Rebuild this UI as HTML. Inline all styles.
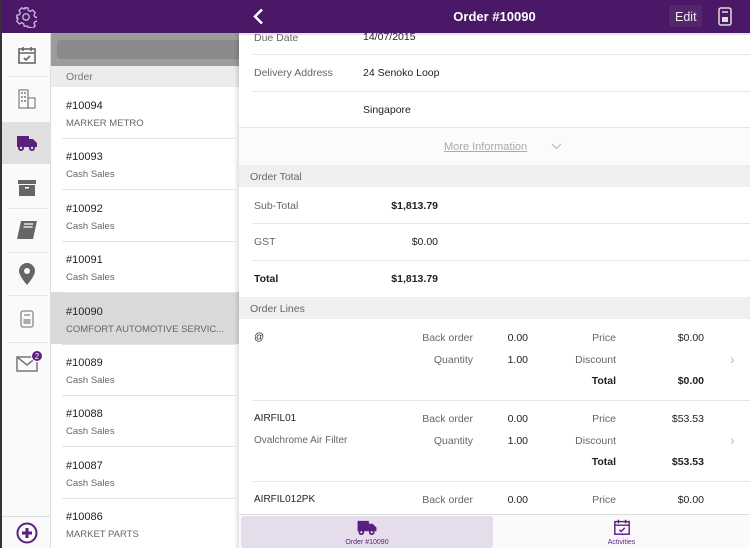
<!DOCTYPE html>
<html><head><style>
*{margin:0;padding:0;box-sizing:border-box}
body{width:750px;height:548px;overflow:hidden;font-family:"Liberation Sans",sans-serif;background:#fff;position:relative}
.a{position:absolute}
.pur{background:#4a1866}
.t{position:absolute;font-size:10.5px;color:#666;white-space:nowrap}
.k{color:#222}
.b{font-weight:bold;color:#222}
.hl{position:absolute;height:1px;background:#e6e6e6}
</style></head><body>
<div class="a" style="left:0;top:0;width:2px;height:548px;background:#333"></div>
<div class="a pur" style="left:2px;top:0;width:49px;height:33px"></div>
<svg class="a" style="left:15px;top:6px" width="22" height="22" viewBox="0 0 24 24" fill="none" stroke="#c9b2e0" stroke-width="1.5"><circle cx="12" cy="12" r="3.5"/><path d="M10 2h4l.6 2.8 2 1 2.6-1.3 2.8 2.8-1.3 2.6 1 2 2.8.6v4l-2.8.6-1 2 1.3 2.6-2.8 2.8-2.6-1.3-2 1L14 22h-4l-.6-2.8-2-1-2.6 1.3-2.8-2.8 1.3-2.6-1-2L2 14v-4l2.8-.6 1-2-1.3-2.6 2.8-2.8 2.6 1.3 2-1z"/></svg>
<div class="a" style="left:2px;top:33px;width:49px;height:515px;background:#fafafa;border-right:1px solid #ddd"></div>
<svg class="a" style="left:17px;top:45px" width="20" height="20" viewBox="0 0 20 20" fill="none" stroke="#666" stroke-width="1.6"><rect x="2" y="4" width="16" height="14"/><path d="M2 8h16M6 2v4M14 2v4M7 13l2 2 4-4"/></svg>
<div class="hl" style="left:8px;top:76px;width:40px"></div>
<svg class="a" style="left:17px;top:88px" width="20" height="22" viewBox="0 0 20 22" fill="#999"><rect x="2" y="2" width="9" height="18" fill="none" stroke="#888" stroke-width="1.3"/><rect x="11" y="10" width="7" height="10" fill="none" stroke="#888" stroke-width="1.3"/><rect x="4" y="4" width="2" height="2"/><rect x="7" y="4" width="2" height="2"/><rect x="4" y="8" width="2" height="2"/><rect x="7" y="8" width="2" height="2"/><rect x="4" y="12" width="2" height="2"/><rect x="7" y="12" width="2" height="2"/></svg>
<div class="a" style="left:2px;top:122px;width:48px;height:42px;background:#e0e0e0"></div>
<svg class="a" style="left:16px;top:134px" width="22" height="18" viewBox="0 0 22 18" fill="#5b1f7e"><path d="M1 2h12v11H1zM13 5h4l4 4v4h-8z"/><circle cx="5" cy="14" r="3"/><circle cx="16" cy="14" r="3"/><circle cx="5" cy="14" r="1.2" fill="#e0e0e0"/><circle cx="16" cy="14" r="1.2" fill="#e0e0e0"/></svg>
<svg class="a" style="left:18px;top:180px" width="18" height="16" viewBox="0 0 18 16" fill="#666"><rect x="0" y="0" width="18" height="4"/><rect x="1" y="5" width="16" height="11"/><rect x="7" y="7" width="4" height="1.5" fill="#fff"/></svg>
<div class="hl" style="left:8px;top:208px;width:40px"></div>
<svg class="a" style="left:16px;top:220px" width="22" height="20" viewBox="0 0 22 20" fill="#666"><path d="M5 1h16l-4 18H1z"/><path d="M8 4h9M7.5 7h9" stroke="#fff" stroke-width="1.3"/></svg>
<div class="hl" style="left:8px;top:252px;width:40px"></div>
<svg class="a" style="left:19px;top:263px" width="16" height="22" viewBox="0 0 16 22" fill="#666"><path d="M8 0a8 8 0 0 1 8 8c0 5-8 14-8 14S0 13 0 8a8 8 0 0 1 8-8z"/><circle cx="8" cy="8" r="3" fill="#fafafa"/></svg>
<div class="hl" style="left:8px;top:295px;width:40px"></div>
<svg class="a" style="left:20px;top:310px" width="14" height="18" viewBox="0 0 14 18" fill="none" stroke="#888" stroke-width="1.3"><rect x="1" y="1" width="12" height="16" rx="2"/><rect x="3.5" y="9" width="7" height="5" fill="#aaa" stroke="none"/><path d="M4 5h6"/></svg>
<div class="hl" style="left:8px;top:342px;width:40px"></div>
<svg class="a" style="left:16px;top:356px" width="22" height="16" viewBox="0 0 22 16" fill="none" stroke="#777" stroke-width="1.5"><rect x="1" y="1" width="20" height="14"/><path d="M1 1l10 8 10-8"/></svg>
<div class="a" style="left:31px;top:350px;width:12px;height:12px;border-radius:6px;background:#5b1f7e;color:#fff;font-size:8px;text-align:center;line-height:12px;border:1px solid #fff">2</div>
<div class="a" style="left:2px;top:516px;width:49px;height:1px;background:#ddd"></div>
<svg class="a" style="left:16px;top:522px" width="22" height="22" viewBox="0 0 22 22"><circle cx="11" cy="11" r="9.5" fill="none" stroke="#5b1f7e" stroke-width="2"/><path d="M11 6v10M6 11h10" stroke="#5b1f7e" stroke-width="3"/></svg>
<div class="a pur" style="left:51px;top:0;width:188px;height:33px"></div>
<div class="a" style="left:51px;top:33px;width:188px;height:33px;background:#9c9c9c"></div>
<div class="a" style="left:57px;top:40px;width:182px;height:19px;background:#8a8a8a;border-radius:4px 0 0 4px"></div>
<div class="a" style="left:51px;top:66px;width:188px;height:21px;background:#ececec"></div>
<div class="t" style="left:66px;top:71px;font-size:10.5px;color:#777">Order</div>
<div class="a" style="left:51px;top:292px;width:188px;height:52px;background:#d9d9d9"></div>
<div class="a" style="left:234px;top:33px;width:5px;height:515px;background:linear-gradient(to right,rgba(0,0,0,0),rgba(0,0,0,.12))"></div>
<div id="list"></div>
<div class="a pur" style="left:239px;top:0;width:511px;height:33px"></div>
<svg class="a" style="left:252px;top:8px" width="12" height="17" viewBox="0 0 12 17"><path d="M10 1.5L3 8.5l7 7" stroke="#fff" stroke-width="2.5" fill="none"/></svg>
<div class="a" style="left:239px;top:9px;width:511px;text-align:center;color:#fff;font-size:13px;font-weight:bold">Order #10090</div>
<div class="a" style="left:669px;top:5px;width:33px;height:22px;background:#55256e;border-radius:2px"></div>
<div class="t" style="left:675px;top:10px;color:#eee;font-size:12.5px">Edit</div>
<svg class="a" style="left:718px;top:7px" width="14" height="19" viewBox="0 0 14 19" fill="none" stroke="#ddd" stroke-width="1.5"><rect x="1" y="1" width="12" height="17" rx="2"/><rect x="4" y="10" width="6" height="5" fill="#ddd" stroke="none"/><path d="M4 5h6"/></svg>
<div class="a" style="left:239px;top:33px;width:511px;height:2px;background:#e8e2ee"></div>
<div class="t" style="left:254px;top:32px">Due Date</div><div class="t k" style="left:363px;top:31px">14/07/2015</div>
<div class="hl" style="left:252px;top:54px;width:498px"></div>
<div class="t" style="left:254px;top:67px">Delivery Address</div><div class="t k" style="left:363px;top:67px">24 Senoko Loop</div>
<div class="hl" style="left:252px;top:91px;width:498px"></div>
<div class="t k" style="left:363px;top:104px">Singapore</div>
<div class="a" style="left:239px;top:127px;width:511px;height:38px;background:#fbfbfb;border-top:1px solid #e6e6e6"></div>
<div class="t" style="left:444px;top:141px;color:#aaa;text-decoration:underline;font-size:11px">More Information</div>
<svg class="a" style="left:551px;top:143px" width="11" height="7" viewBox="0 0 11 7"><path d="M1 1l4.5 4.5L10 1" stroke="#bbb" stroke-width="1.2" fill="none"/></svg>
<div class="a" style="left:239px;top:165px;width:511px;height:22px;background:#efefef"></div>
<div class="t" style="left:250px;top:171px">Order Total</div>
<div class="t" style="left:254px;top:200px">Sub-Total</div><div class="t b" style="left:340px;top:200px;width:98px;text-align:right">$1,813.79</div>
<div class="hl" style="left:252px;top:223px;width:498px"></div>
<div class="t" style="left:254px;top:236px">GST</div><div class="t b" style="left:340px;top:236px;width:98px;text-align:right;font-weight:normal">$0.00</div>
<div class="hl" style="left:252px;top:260px;width:498px"></div>
<div class="t b" style="left:254px;top:273px">Total</div><div class="t b" style="left:340px;top:273px;width:98px;text-align:right">$1,813.79</div>
<div class="a" style="left:239px;top:297px;width:511px;height:22px;background:#efefef"></div>
<div class="t" style="left:250px;top:303px">Order Lines</div>
<div id="lines"></div>
<div class="a" style="left:239px;top:514px;width:511px;height:34px;background:#fafafa;border-top:1px solid #ddd"></div>
<div class="a" style="left:241px;top:516px;width:252px;height:32px;background:#e6ddec;border-radius:3px"></div>
<svg class="a" style="left:356px;top:519px" width="22" height="17" viewBox="0 0 22 18" fill="#5b1f7e"><path d="M1 2h12v11H1zM13 5h4l4 4v4h-8z"/><circle cx="5" cy="14" r="3"/><circle cx="16" cy="14" r="3"/><circle cx="5" cy="14" r="1.2" fill="#e6ddec"/><circle cx="16" cy="14" r="1.2" fill="#e6ddec"/></svg>
<div class="t" style="left:241px;top:539px;width:252px;text-align:center;font-size:7px;color:#5b1f7e">Order #10090</div>
<svg class="a" style="left:613px;top:518px" width="18" height="18" viewBox="0 0 20 20" fill="none" stroke="#5b1f7e" stroke-width="1.6"><rect x="2" y="4" width="16" height="14"/><path d="M2 8h16M6 2v4M14 2v4M7 13l2 2 4-4"/></svg>
<div class="t" style="left:493px;top:539px;width:257px;text-align:center;font-size:7px;color:#5b1f7e">Activities</div>
<script>
var L=[["#10094","MARKER METRO"],["#10093","Cash Sales"],["#10092","Cash Sales"],["#10091","Cash Sales"],["#10090","COMFORT AUTOMOTIVE SERVIC..."],["#10089","Cash Sales"],["#10088","Cash Sales"],["#10087","Cash Sales"],["#10086","MARKET PARTS"]],h="";
L.forEach(function(r,i){var y=87+i*51.4;h+='<div class="t k" style="left:66px;top:'+(y+13)+'px;font-size:11px">'+r[0]+'</div><div class="t" style="left:66px;top:'+(y+31)+'px;font-size:9.5px">'+r[1]+'</div>';if(i<8)h+='<div class="hl" style="left:62px;top:'+(y+51)+'px;width:174px;background:#e4e4e4"></div>';});
document.getElementById('list').innerHTML=h;
var O=[["@","","$0.00","$0.00"],["AIRFIL01","Ovalchrome Air Filter","$53.53","$53.53"],["AIRFIL012PK","","$0.00","$0.00"]],g="";
O.forEach(function(o,i){var y=332+i*81;
g+='<div class="t k" style="left:254px;top:'+y+'px;font-size:10px">'+o[0]+'</div><div class="t" style="left:254px;top:'+(y+22)+'px;font-size:10px">'+o[1]+'</div>';
g+='<div class="t" style="left:380px;top:'+y+'px;width:93px;text-align:right">Back order</div><div class="t k" style="left:490px;top:'+y+'px;width:38px;text-align:right">0.00</div><div class="t" style="left:540px;top:'+y+'px;width:76px;text-align:right">Price</div><div class="t k" style="left:640px;top:'+y+'px;width:64px;text-align:right">'+o[2]+'</div>';
if(i<2){g+='<div class="t" style="left:380px;top:'+(y+22)+'px;width:93px;text-align:right">Quantity</div><div class="t k" style="left:490px;top:'+(y+22)+'px;width:38px;text-align:right">1.00</div><div class="t" style="left:540px;top:'+(y+22)+'px;width:76px;text-align:right">Discount</div><div class="t" style="left:730px;top:'+(y+19)+'px;color:#bbb;font-size:14px">›</div><div class="t b" style="left:540px;top:'+(y+43)+'px;width:76px;text-align:right">Total</div><div class="t b" style="left:640px;top:'+(y+43)+'px;width:64px;text-align:right">'+o[3]+'</div><div class="hl" style="left:252px;top:'+(y+68)+'px;width:498px"></div>';}
});
document.getElementById('lines').innerHTML=g;
</script>
</body></html>
